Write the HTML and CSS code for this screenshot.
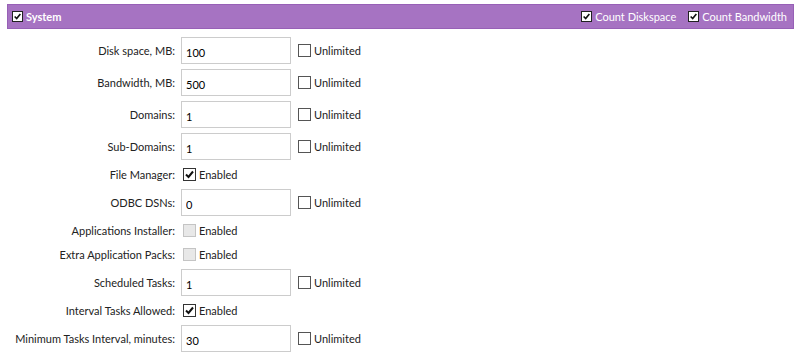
FILE: index.html
```html
<!DOCTYPE html>
<html lang="en">
<head>
    <meta charset="UTF-8">
    <title>Hosting Plan Quotas</title>
    <link rel="stylesheet" href="styles.css">
</head>
<body>
    <div class="page">
        <div class="group-header">
            <label class="hdr-check">
                <span class="box"><svg viewBox="0 0 11 11"><path d="M2 5.5 L4.5 8 L9 2.5" /></svg></span>
                <b>System</b>
            </label>
            <div class="hdr-right">
                <label class="hdr-check">
                    <span class="box"><svg viewBox="0 0 11 11"><path d="M2 5.5 L4.5 8 L9 2.5" /></svg></span>
                    Count Diskspace
                </label>
                <label class="hdr-check">
                    <span class="box"><svg viewBox="0 0 11 11"><path d="M2 5.5 L4.5 8 L9 2.5" /></svg></span>
                    Count Bandwidth
                </label>
            </div>
        </div>

        <div class="quotas">
            <div class="q-label">Disk space, MB:</div>
            <div class="q-field">
                <input type="text" class="q-input" value="100">
                <label class="chk"><span class="cb"></span>Unlimited</label>
            </div>

            <div class="q-label">Bandwidth, MB:</div>
            <div class="q-field">
                <input type="text" class="q-input" value="500">
                <label class="chk"><span class="cb"></span>Unlimited</label>
            </div>

            <div class="q-label">Domains:</div>
            <div class="q-field">
                <input type="text" class="q-input" value="1">
                <label class="chk"><span class="cb"></span>Unlimited</label>
            </div>

            <div class="q-label">Sub-Domains:</div>
            <div class="q-field">
                <input type="text" class="q-input" value="1">
                <label class="chk"><span class="cb"></span>Unlimited</label>
            </div>

            <div class="q-label short">File Manager:</div>
            <div class="q-field short">
                <label class="chk enabled"><span class="cb on"><svg viewBox="0 0 11 11"><path d="M2 5.5 L4.5 8 L9 2.5" /></svg></span>Enabled</label>
            </div>

            <div class="q-label">ODBC DSNs:</div>
            <div class="q-field">
                <input type="text" class="q-input" value="0">
                <label class="chk"><span class="cb"></span>Unlimited</label>
            </div>

            <div class="q-label short">Applications Installer:</div>
            <div class="q-field short">
                <label class="chk enabled"><span class="cb disabled"></span>Enabled</label>
            </div>

            <div class="q-label short">Extra Application Packs:</div>
            <div class="q-field short">
                <label class="chk enabled"><span class="cb disabled"></span>Enabled</label>
            </div>

            <div class="q-label">Scheduled Tasks:</div>
            <div class="q-field">
                <input type="text" class="q-input" value="1">
                <label class="chk"><span class="cb"></span>Unlimited</label>
            </div>

            <div class="q-label short">Interval Tasks Allowed:</div>
            <div class="q-field short">
                <label class="chk enabled"><span class="cb on"><svg viewBox="0 0 11 11"><path d="M2 5.5 L4.5 8 L9 2.5" /></svg></span>Enabled</label>
            </div>

            <div class="q-label">Minimum Tasks Interval, minutes:</div>
            <div class="q-field">
                <input type="text" class="q-input" value="30">
                <label class="chk"><span class="cb"></span>Unlimited</label>
            </div>
        </div>
    </div>
</body>
</html>
```

FILE: styles.css
```css
body {
    margin: 0;
    padding: 0;
    background-color: #ffffff;
    font-family: Lato, "Open Sans", Arial, sans-serif;
    font-size: 11px;
    color: #222222;
}
.page {
    padding: 4px 6px 0 7px;
}
.group-header {
    display: flex;
    justify-content: space-between;
    align-items: center;
    height: 23px;
    padding: 0 6px 0 4px;
    background-color: #a673c2;
    border: 1px solid #9760b6;
    color: #ffffff;
}
.hdr-right {
    display: flex;
    gap: 12px;
}
.hdr-check {
    display: flex;
    align-items: center;
    gap: 3px;
}
.hdr-check b {
    font-weight: 700;
}
.box {
    display: inline-block;
    width: 9px;
    height: 9px;
    background-color: #ffffff;
    border: 1px solid #222222;
}
.box svg,
.cb svg {
    display: block;
    width: 100%;
    height: 100%;
}
.box svg path,
.cb svg path {
    fill: none;
    stroke: #111111;
    stroke-width: 2;
}
.quotas {
    display: grid;
    grid-template-columns: 168px auto;
    column-gap: 6px;
    row-gap: 5px;
    margin-top: 8px;
}
.q-label {
    display: flex;
    align-items: center;
    justify-content: flex-end;
    height: 27px;
    white-space: nowrap;
}
.q-field {
    display: flex;
    align-items: center;
    height: 27px;
}
.q-label.short,
.q-field.short {
    height: 19px;
}
.q-input {
    box-sizing: border-box;
    width: 110px;
    height: 27px;
    margin: 0;
    padding: 3px 4px 0;
    border: 1px solid #cccccc;
    font-family: inherit;
    font-size: 11px;
    color: #000000;
}
.chk {
    display: flex;
    align-items: center;
    gap: 3px;
    margin-left: 7px;
}
.chk.enabled {
    margin-left: 2px;
}
.cb {
    display: inline-block;
    width: 11px;
    height: 11px;
    background-color: #ffffff;
    border: 1px solid #555555;
}
.cb.on {
    border-color: #333333;
}
.cb.disabled {
    background-color: #e8e8e8;
    border-color: #c4c4c4;
}
```
